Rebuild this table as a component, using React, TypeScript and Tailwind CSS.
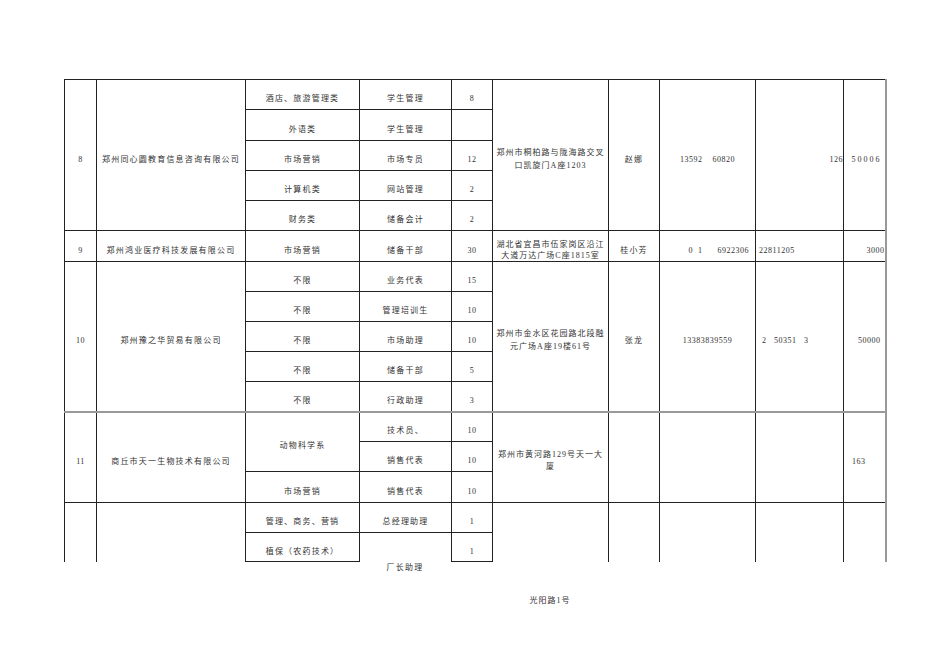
const td = "border border-[#222] px-0 pb-0 pt-[8px] text-center align-middle";
const num = "tracking-[0.5px]";
const grayTop = "border-t-2 border-t-[#999]";
const grayRight = "border-r-2 border-r-[#999]";

export default function App() {
  return (
    <div className="min-h-[672px] w-[950px] bg-white pl-[64px] pt-[79px] font-['Liberation_Serif','Noto_Sans_CJK_SC',serif] text-[8px] leading-[11px] tracking-[1.2px] text-[#333]">
      <table className="w-[821px] table-fixed border-collapse">
        <colgroup>
          <col className="w-[32px]" />
          <col className="w-[149px]" />
          <col className="w-[114px]" />
          <col className="w-[92px]" />
          <col className="w-[41px]" />
          <col className="w-[116px]" />
          <col className="w-[51px]" />
          <col className="w-[96px]" />
          <col className="w-[88px]" />
          <col className="w-[42px]" />
        </colgroup>
        <tbody>
          {/* 8 */}
          <tr className="h-[30px]">
            <td rowSpan={5} className={`${td} ${num}`}>8</td>
            <td rowSpan={5} className={td}>郑州同心圆教育信息咨询有限公司</td>
            <td className={td}>酒店、旅游管理类</td>
            <td className={td}>学生管理</td>
            <td className={`${td} ${num}`}>8</td>
            <td rowSpan={5} className={`${td} leading-[13px] tracking-[1px]`}>
              郑州市桐柏路与陇海路交叉
              <br />
              口凯旋门A座1203
            </td>
            <td rowSpan={5} className={td}>赵娜</td>
            <td rowSpan={5} className={`${td} ${num} whitespace-pre`}>13592    60820</td>
            <td rowSpan={5} className={`${td} ${num} pt-[4px] text-right`}>126</td>
            <td rowSpan={5} className={`${td} ${grayRight} pr-[3px] text-right tracking-[2px]`}>50006</td>
          </tr>
          <tr className="h-[31px]">
            <td className={td}>外语类</td>
            <td className={td}>学生管理</td>
            <td className={td}></td>
          </tr>
          <tr className="h-[30px]">
            <td className={td}>市场营销</td>
            <td className={td}>市场专员</td>
            <td className={`${td} ${num}`}>12</td>
          </tr>
          <tr className="h-[30px]">
            <td className={td}>计算机类</td>
            <td className={td}>网站管理</td>
            <td className={`${td} ${num}`}>2</td>
          </tr>
          <tr className="h-[30px]">
            <td className={td}>财务类</td>
            <td className={td}>储备会计</td>
            <td className={`${td} ${num}`}>2</td>
          </tr>

          {/* 9 */}
          <tr className="h-[30px]">
            <td className={`${td} ${num}`}>9</td>
            <td className={td}>郑州鸿业医疗科技发展有限公司</td>
            <td className={td}>市场营销</td>
            <td className={td}>储备干部</td>
            <td className={`${td} ${num}`}>30</td>
            <td className={`${td} pt-[4px] leading-[11px] tracking-[1px]`}>
              湖北省宜昌市伍家岗区沿江
              <br />
              大道万达广场C座1815室
            </td>
            <td className={td}>桂小芳</td>
            <td className={`${td} ${num} whitespace-pre pr-[6px] text-right`}>0  1      6922306</td>
            <td className={`${td} ${num} pl-[3px] text-left`}>22811205</td>
            <td className={`${td} ${num} ${grayRight} text-right`}>3000</td>
          </tr>

          {/* 10 */}
          <tr className="h-[30px]">
            <td rowSpan={5} className={`${td} ${num}`}>10</td>
            <td rowSpan={5} className={td}>郑州豫之华贸易有限公司</td>
            <td className={td}>不限</td>
            <td className={td}>业务代表</td>
            <td className={`${td} ${num}`}>15</td>
            <td rowSpan={5} className={`${td} leading-[13px] tracking-[1px]`}>
              郑州市金水区花园路北段融
              <br />
              元广场A座19楼61号
            </td>
            <td rowSpan={5} className={td}>张龙</td>
            <td rowSpan={5} className={`${td} ${num}`}>13383839559</td>
            <td rowSpan={5} className={`${td} ${num} whitespace-pre pl-[6px] text-left`}>2   50351   3</td>
            <td rowSpan={5} className={`${td} ${num} ${grayRight} pr-[4px] text-right`}>50000</td>
          </tr>
          <tr className="h-[30px]">
            <td className={td}>不限</td>
            <td className={td}>管理培训生</td>
            <td className={`${td} ${num}`}>10</td>
          </tr>
          <tr className="h-[30px]">
            <td className={td}>不限</td>
            <td className={td}>市场助理</td>
            <td className={`${td} ${num}`}>10</td>
          </tr>
          <tr className="h-[30px]">
            <td className={td}>不限</td>
            <td className={td}>储备干部</td>
            <td className={`${td} ${num}`}>5</td>
          </tr>
          <tr className="h-[30px]">
            <td className={td}>不限</td>
            <td className={td}>行政助理</td>
            <td className={`${td} ${num}`}>3</td>
          </tr>

          {/* 11 */}
          <tr className="h-[30px]">
            <td rowSpan={3} className={`${td} ${num} ${grayTop}`}>11</td>
            <td rowSpan={3} className={`${td} ${grayTop}`}>商丘市天一生物技术有限公司</td>
            <td rowSpan={2} className={`${td} ${grayTop}`}>动物科学系</td>
            <td className={`${td} ${grayTop}`}>技术员、</td>
            <td className={`${td} ${num} ${grayTop}`}>10</td>
            <td rowSpan={3} className={`${td} ${grayTop} leading-[12px] tracking-[1px]`}>
              郑州市黄河路129号天一大
              <br />
              厦
            </td>
            <td rowSpan={3} className={`${td} ${grayTop}`}></td>
            <td rowSpan={3} className={`${td} ${grayTop}`}></td>
            <td rowSpan={3} className={`${td} ${grayTop}`}></td>
            <td rowSpan={3} className={`${td} ${num} ${grayTop} ${grayRight} pl-[8px] pt-[5px] text-left`}>163</td>
          </tr>
          <tr className="h-[30px]">
            <td className={td}>销售代表</td>
            <td className={`${td} ${num}`}>10</td>
          </tr>
          <tr className="h-[31px]">
            <td className={td}>市场营销</td>
            <td className={td}>销售代表</td>
            <td className={`${td} ${num}`}>10</td>
          </tr>

          {/* 12 */}
          <tr className="h-[30px]">
            <td rowSpan={2} className={`${td} border-b-0`}></td>
            <td rowSpan={2} className={`${td} border-b-0`}></td>
            <td className={td}>管理、商务、营销</td>
            <td className={td}>总经理助理</td>
            <td className={`${td} ${num}`}>1</td>
            <td rowSpan={2} className={`${td} border-b-0`}></td>
            <td rowSpan={2} className={`${td} border-b-0`}></td>
            <td rowSpan={2} className={`${td} border-b-0`}></td>
            <td rowSpan={2} className={`${td} border-b-0`}></td>
            <td rowSpan={2} className={`${td} border-b-0 ${grayRight}`}></td>
          </tr>
          <tr className="h-[29px]">
            <td className={td}>植保（农药技术）</td>
            <td className={`${td} border-b-0`}></td>
            <td className={`${td} ${num}`}>1</td>
          </tr>
        </tbody>
      </table>

      {/* text that runs past the page cut */}
      <div className="grid w-[821px] grid-cols-[32px_149px_114px_92px_41px_116px_51px_96px_88px_42px] text-center">
        <div className="col-start-4">厂长助理</div>
        <div className="col-start-6 pt-[33px] tracking-[1px]">光阳路1号</div>
      </div>
    </div>
  );
}
